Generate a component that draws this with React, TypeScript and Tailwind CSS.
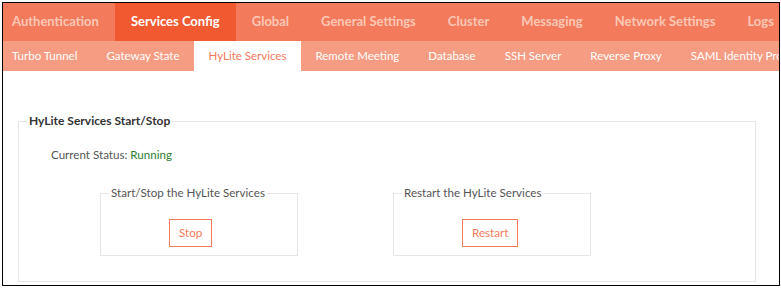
const topTabs = ["Authentication", "Services Config", "Global", "General Settings", "Cluster", "Messaging", "Network Settings", "Logs"];
const subTabs = ["Turbo Tunnel", "Gateway State", "HyLite Services", "Remote Meeting", "Database", "SSH Server", "Reverse Proxy", "SAML Identity Provider"];

function ServiceBox({ title, action }: { title: string; action: string }) {
  return (
    <fieldset className="w-[198px] border border-[#e6e6e6] pb-[8px]">
      <legend className="ml-[8px] px-[2px] text-[11.6px] leading-[18px] text-[#555] whitespace-nowrap">{title}</legend>
      <button className="ml-[68px] mt-[17px] h-[28px] border border-[#f37b5b] px-[9px] text-[11.6px] text-[#f37b5b]">
        {action}
      </button>
    </fieldset>
  );
}

export default function App() {
  return (
    <div className="p-[2px] pr-[1px] pb-[3px] font-['Lato',sans-serif]">
      <div className="h-[284px] border border-black overflow-hidden bg-white">
        <div className="bg-[#f37b5c] h-[38px] overflow-hidden">
          <ul className="flex -ml-[7px] h-full whitespace-nowrap">
            {topTabs.map((t) => (
              <li
                key={t}
                className={
                  t === "Services Config"
                    ? "flex items-center px-[16px] bg-[#f15a30] text-white text-[13px] font-bold"
                    : "flex items-center px-[16px] text-[#fcc7b6] text-[13px] font-bold"
                }
              >
                {t}
              </li>
            ))}
          </ul>
        </div>
        <div className="bg-[#f69c83] h-[30px] overflow-hidden">
          <ul className="flex -ml-[5.5px] h-full whitespace-nowrap">
            {subTabs.map((t) => (
              <li
                key={t}
                className={
                  t === "HyLite Services"
                    ? "flex items-center px-[14.5px] bg-white text-[#f3795a] text-[11.5px]"
                    : "flex items-center px-[14.5px] text-white text-[11.5px]"
                }
              >
                {t}
              </li>
            ))}
          </ul>
        </div>
        <div className="pt-[41px] pl-[15px] pr-[23px]">
          <fieldset className="border border-[#e6e6e6] pb-[24px] h-[170px]">
            <legend className="ml-[8px] px-[2px] text-[12px] leading-[18px] font-bold text-[#333]">
              HyLite Services Start/Stop
            </legend>
            <p className="mt-[16px] ml-[32px] text-[11.6px] leading-[18px] text-[#555]">
              Current Status: <span className="text-[#2e7d32]">Running</span>
            </p>
            <div className="flex gap-[95px] ml-[81px] mt-[20px]">
              <ServiceBox title="Start/Stop the HyLite Services" action="Stop" />
              <ServiceBox title="Restart the HyLite Services" action="Restart" />
            </div>
          </fieldset>
        </div>
      </div>
    </div>
  );
}
